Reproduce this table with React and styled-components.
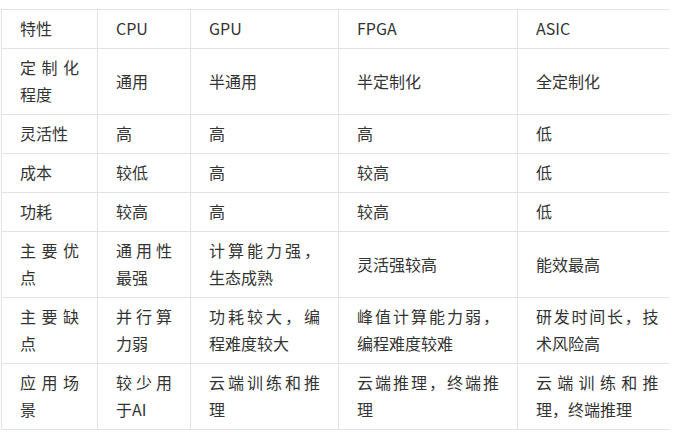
import styled, { createGlobalStyle } from "styled-components";

const GlobalStyle = createGlobalStyle`
  body {
    margin: 0;
    background: #fff;
    font-family: "Noto Sans CJK SC", "Noto Sans", sans-serif;
    color: #333;
  }
`;

const Wrap = styled.div`
  padding: 9px 0 0 1px;
`;

const Table = styled.table`
  border-collapse: collapse;
  table-layout: fixed;
  width: 667px;
  font-size: 16px;
  line-height: 27px;
`;

const Cell = styled.td`
  border: 1px solid #e2e2e2;
  padding: 5px 18px 6px 18px;
  text-align: justify;
  vertical-align: middle;
  word-break: break-all;

  &:last-child {
    border-right: none;
    padding-right: 10px;
  }
`;

const widths = [96, 93, 148, 179, 151];

const rows = [
  ["特性", "CPU", "GPU", "FPGA", "ASIC"],
  ["定制化程度", "通用", "半通用", "半定制化", "全定制化"],
  ["灵活性", "高", "高", "高", "低"],
  ["成本", "较低", "高", "较高", "低"],
  ["功耗", "较高", "高", "较高", "低"],
  ["主要优点", "通用性最强", "计算能力强，生态成熟", "灵活强较高", "能效最高"],
  ["主要缺点", "并行算力弱", "功耗较大，编程难度较大", "峰值计算能力弱，编程难度较难", "研发时间长，技术风险高"],
  ["应用场景", "较少用于AI", "云端训练和推理", "云端推理，终端推理", "云端训练和推理，终端推理"],
];

export default function App() {
  return (
    <>
      <GlobalStyle />
      <Wrap>
        <Table>
          <colgroup>
            {widths.map((w, i) => (
              <col key={i} style={{ width: w }} />
            ))}
          </colgroup>
          <tbody>
            {rows.map((row, r) => (
              <tr key={r}>
                {row.map((text, c) => (
                  <Cell key={c}>{text}</Cell>
                ))}
              </tr>
            ))}
          </tbody>
        </Table>
      </Wrap>
    </>
  );
}
